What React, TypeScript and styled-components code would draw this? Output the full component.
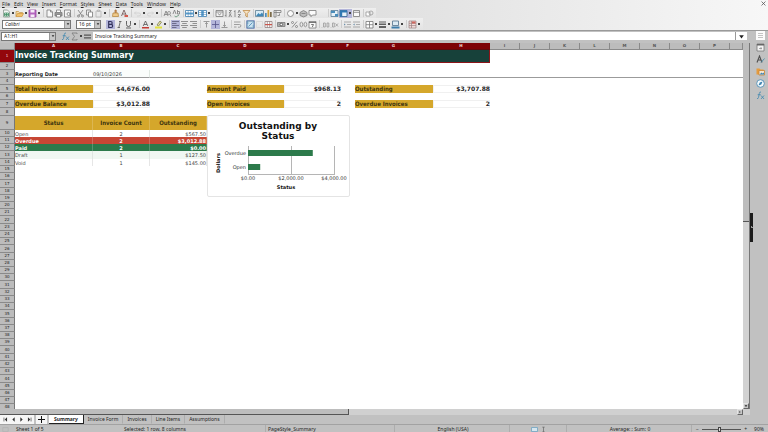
import React from "react";
import styled, { createGlobalStyle, css } from "styled-components";

const UI_FONT = `"Noto Sans", "Open Sans", sans-serif`;
const CELL_FONT = `"DejaVu Sans", sans-serif`;
const LABEL_FONT = `"DejaVu Sans Condensed", "DejaVu Sans", sans-serif`;

const color = {
  chrome: "#c1c1c1",
  gutter: "#bcbcbc",
  edge: "#8a8a8a",
  selected: "#7d0206",
  title: "#17413a",
  gold: "#d5a72b",
  red: "#c74634",
  green: "#2c7a4b",
  ink: "#262626",
};

const GlobalStyle = createGlobalStyle`
  * { box-sizing: border-box; }
  html, body, #root { margin: 0; height: 100%; }
  body { overflow: hidden; background: ${color.chrome}; font-family: ${UI_FONT}; font-size: 5px; color: ${color.ink}; }
  button, input, select { font: inherit; color: inherit; margin: 0; padding: 0; border: 0; background: none; border-radius: 0; outline: 0; }
`;

/* ---------- icons ---------- */

type Layer = { d: string; s?: string; f?: string; w?: number };
const G = "#7a7a7a";
const B = "#3f7fb0";
const L = "#b4b4b4";

const icons: Record<string, Layer[]> = {
  newDoc: [
    { d: "M1.5 1h4l2 2v5h-6z", s: "#8c9a90", f: "#f4f6f4" },
    { d: "M2.5 4h4v3h-4zM4.5 4v3M2.5 5.5h4", s: "#3f8f62" },
  ],
  open: [
    { d: "M1 7.5v-5h2.5l1 1h3v1", s: "#c79a52", f: "#f3dca8" },
    { d: "M1 7.5l1.5-3h6l-1.5 3z", s: "#d29b45", f: "#f2c26d" },
  ],
  save: [
    { d: "M1 1h7v7h-7z", s: "#9a4aa5", f: "#b566bf" },
    { d: "M2.5 1h4v2.5h-4zM2.5 5.5h4v2.5h-4z", f: "#f6ecf7" },
  ],
  exportDoc: [{ d: "M2 1h3.5l2 2v5h-5.500z", s: G, f: "#f8f8f8" }, { d: "M5.500 1v2h2", s: G }],
  print: [{ d: "M1 3.500h7v3.500h-7z", s: G, f: "#999" }, { d: "M2.500 1h4v2.500h-4zM2.500 5.500h4v2.500h-4z", s: G, f: "#fff" }],
  preview: [{ d: "M1.500 1h6v7h-6z", s: G, f: "#f5f5f5" }, { d: "M4 5a1.500 1.500 0 1 0 3 0a1.500 1.500 0 1 0-3 0M6.500 6.200l1.500 1.500", s: G }],
  cut: [{ d: "M2 1l4 5.500M7 1l-4 5.500M1.500 7a1 1 0 1 0 2 0a1 1 0 1 0-2 0M5.500 7a1 1 0 1 0 2 0a1 1 0 1 0-2 0", s: G }],
  copy: [{ d: "M1.500 1h4v5h-4z", s: G, f: "#eee" }, { d: "M3.500 3h4v5h-4z", s: G, f: "#fff" }],
  paste: [{ d: "M2 2h5v6h-5zM3.500 1h2v1.500h-2z", s: L }],
  brush: [{ d: "M4 1h1.200v3h-1.200z", s: "#a9713d", f: "#d79a5b" }, { d: "M2 4h5l.5 3.500h-6z", s: "#b88c45", f: "#efc98a" }],
  clear: [{ d: "M1.500 7l2.500-6l2.500 6M2.500 5h3", s: "#6b4d4d" }, { d: "M4.500 6h3.500v2h-3.500z", f: "#d4584c" }],
  undo: [{ d: "M1.500 4h4.500a1.500 1.500 0 0 1 0 3h-2M3 2.500l-1.500 1.500l1.500 1.500", s: "#cfcfcf" }],
  redo: [{ d: "M7.500 4h-4.500a1.500 1.500 0 0 0 0 3h2M6 2.500l1.500 1.500l-1.500 1.500", s: "#cfcfcf" }],
  find: [{ d: "M1 7l2-5l2 5M1.500 5.500h3", s: G }, { d: "M4.500 4a1.500 1.500 0 1 0 3 0a1.500 1.500 0 1 0-3 0M7 5.500l1 2", s: "#8a8a8a" }],
  spell: [{ d: "M1 5l1.500-4l1.500 4M5.500 1v4h2v-2.500h-2", s: G }, { d: "M2.500 7l1.500 1l3-2", s: "#5b8f70" }],
  row: [{ d: "M.5 1.500h8v6h-8z", s: B, f: "#fff" }, { d: "M1 3.500h7v2h-7z", f: "#5a9ccc" }, { d: "M3.200 1.500v6M5.800 1.500v6", s: B, w: 0.5 }],
  col: [{ d: "M.5 1.500h8v6h-8z", s: B, f: "#fff" }, { d: "M3.200 1.500h2.600v6h-2.600z", f: "#5a9ccc" }, { d: "M.5 3.500h8M.5 5.500h8", s: B, w: 0.5 }],
  sort: [{ d: "M1 1.500h7v6h-7zM1 3h7", s: G, f: "#f3f3f3" }, { d: "M3 4.200l1.500 2l1.500-2", s: G }],
  asc: [{ d: "M2 1v6.500l-1-1.500M5 1.500h2.500l-2.500 2.500h2.500M5 8l1.200-3l1.300 3", s: G }],
  desc: [{ d: "M2 8v-6.500l-1 1.500M5 4l1.200-3l1.300 3M5 5.500h2.500l-2.500 2.500h2.500", s: G }],
  filter: [{ d: "M1 1.500h7l-2.700 3v3.500l-1.600-1v-2.500z", s: "#c08a48", f: "#f6e4c4" }],
  image: [{ d: "M.5 1.500h8v6h-8z", s: "#5f7f93", f: "#d9ecf6" }, { d: "M1 7l2.500-3l1.500 1.500l2-2l1 1.500v2z", f: "#3f88b8" }],
  chart: [{ d: "M1 4h1.700v4h-1.700z", f: "#4a90c0" }, { d: "M3.500 1h1.700v7h-1.700z", f: "#d5a23d" }, { d: "M6 3h1.700v5h-1.700z", f: "#7a6a4a" }],
  pivot: [{ d: "M1 1.500h7v2h-5v4.500h-2zM3 1.500v2h-2", s: G, f: "#f2f2f2" }, { d: "M4.500 6.500h2v-2", s: G }],
  shapes: [{ d: "M1.500 4.500a3 3 0 1 0 6 0a3 3 0 1 0-6 0", s: G, f: "#fafafa" }],
  link: [{ d: "M1 3.500l3.500-2l3.500 2v3l-3.500 1.500l-3.500-1.500z", s: G, f: "#bdbdbd" }, { d: "M2.500 4.500h4", s: G }],
  comment: [{ d: "M1 1.500h7v4.500h-3.500l-1.500 1.700v-1.700h-2z", s: G, f: "#fcfcfc" }],
  header: [{ d: "M1 1.500h7v6h-7z", s: "#567a94", f: "#e6f1f8" }, { d: "M1 2h4v2h-4zM5 5h3v2.500h-3z", f: "#4b8dbb" }],
  freeze: [{ d: "M1 1.500h7v6h-7z", s: "#2c6391", f: "#e6f1f8" }, { d: "M1 1.500h7v2h-7zM1 1.500h2.200v6h-2.200z", f: "#2f78b3" }],
  split: [{ d: "M1.500 1.500h6v6h-6zM1.500 3.300h6", s: G, f: "#fafafa" }],
  draw: [{ d: "M1 3h4v4h-4z", s: "#9b9b9b", f: "#fff" }, { d: "M4 4a2 2 0 1 0 4 0a2 2 0 1 0-4 0", s: "#9b9b9b" }],
  bold: [{ d: "M2.700 1.500h2a1.400 1.400 0 0 1 0 2.900h-2zM2.700 4.400h2.400a1.500 1.500 0 0 1 0 3.100h-2.400z", s: "#33335c", w: 1.2 }],
  italic: [{ d: "M4 1.500h2.500M2.500 7.500h2.500M5.300 1.500l-1.500 6", s: "#555" }],
  underline: [{ d: "M2.500 1v3.500a2 2 0 0 0 4 0v-3.500M2 8h5", s: "#444" }],
  fontColor: [{ d: "M2.200 6l2.300-5l2.300 5M3 4.500h3", s: "#555" }, { d: "M1 7h7v1.500h-7z", f: "#c33c35" }],
  highlight: [{ d: "M3 5l3-4l1.500 1.200l-3 3.800z", s: "#7c7c55", f: "#e6e3a4" }, { d: "M1 6.500h7v2h-7z", f: "#e3e23d" }],
  left: [{ d: "M1 1.500h7M1 3.500h4.500M1 5.500h7M1 7.500h4.500", s: "#5a5a78" }],
  center: [{ d: "M1 1.500h7M2.200 3.500h4.600M1 5.500h7M2.200 7.500h4.600", s: G }],
  right: [{ d: "M1 1.500h7M3.500 3.500h4.500M1 5.500h7M3.500 7.500h4.500", s: G }],
  top: [{ d: "M1.500 1.500h6M4.500 2.500v5M3.200 4l1.300-1.500l1.300 1.500", s: "#858585" }],
  middle: [{ d: "M1 4.500h7M4.500 1v7", s: "#55558a" }],
  bottom: [{ d: "M1.500 7.500h6M4.500 1.500v5M3.200 5l1.300 1.500l1.300-1.500", s: "#858585" }],
  wrap: [{ d: "M1 2h6.500M1 4.500h5.500a1.300 1.300 0 0 1 0 2.700h-1.500M1 7h2.500", s: "#8a8a8a" }],
  merge: [{ d: "M1 1h7v7h-7z", s: "#3c7096", f: "#c9e1f0" }, { d: "M2.500 6.500l4-4M1 3h1.500M6.500 6h1.500", s: "#4988b4" }],
  mergeOff: [{ d: "M1.500 1.500h6v6h-6z", s: "#d4d4d4" }],
  splitCells: [{ d: "M1 1.500h7v6h-7zM3.300 1.500v6M5.700 1.500v6", s: "#8a7272", f: "#fff", w: 0.7 }, { d: "M1 4h7v1.200h-7z", f: "#c9564c" }],
  currency: [{ d: "M.5 2.500h7.500v4h-7.500z", s: G, f: "#ababab" }, { d: "M3 4.500a1.300 1.300 0 1 0 2.600 0a1.300 1.300 0 1 0-2.600 0", s: "#4b4b4b", f: "#fff" }],
  percent: [{ d: "M7 1.500l-5 6M1.500 2.500a1 1 0 1 0 2 0a1 1 0 1 0-2 0M5.500 6.500a1 1 0 1 0 2 0a1 1 0 1 0-2 0", s: G }],
  number: [{ d: "M1 4.500a1.400 2.300 0 1 0 2.800 0a1.400 2.300 0 1 0-2.800 0M5 4.500a1.400 2.300 0 1 0 2.800 0a1.400 2.300 0 1 0-2.800 0", s: "#858585" }],
  date: [{ d: "M1 1.500h7v6.500h-7z", s: G, f: "#fafafa" }, { d: "M1 2.500h7M3.200 4.500h2.300l-1.200 2.500", s: "#555" }],
  decAdd: [{ d: "M1 7v.5M2.500 3v4h1.800v-4zM6 3v4h1.800v-4z", s: "#9a9a9a" }],
  decDel: [{ d: "M1 7v.5M2.500 3v4h1.800v-4zM5.500 3.500l2.500 3M8 3.500l-2.500 3", s: "#9a9a9a" }],
  indentIn: [{ d: "M1 2h7M4 4.500h4M1 7h7", s: "#9a9a9a" }, { d: "M1 3.500v2l1.700-1z", f: "#6f92ad" }],
  indentOut: [{ d: "M1 2h7M4 4.500h4M1 7h7", s: "#9a9a9a" }, { d: "M2.700 3.500v2l-1.700-1z", f: "#6f92ad" }],
  borders: [{ d: "M1 1.500h7v6.500h-7zM4.500 1.500v6.500M1 4.700h7", s: "#777", f: "#fff" }],
  lineStyle: [{ d: "M1 1.500h7v1h-7zM1 3.500h7v1.500h-7zM1 6h7v2h-7z", f: "#606060" }],
  borderColor: [{ d: "M1.500 1h6v4.500h-6z", s: "#50708a", f: "#dcebf5" }, { d: "M.5 6.500h8v2h-8z", f: "#3c7dac" }],
  condFormat: [{ d: "M1 1h7v7h-7zM1 3.300h7M1 5.600h7M3.500 1v7", s: "#9a7f7f", f: "#f4dfdd", w: 0.7 }, { d: "M4 1.500h3.500v2h-3.500z", f: "#d0675e" }],
  fx: [{ d: "M5 1q-1.500-.3-1.700 1.500l-.8 4q-.3 1.500-1.500 1M1.700 3.700h3M5 4.500l3 3.500M8 4.500l-3 3.500", s: "#4088b0" }],
  sum: [{ d: "M7 2v-1h-5l2.500 3.500l-2.500 3.500h5v-1", s: G }],
  equals: [{ d: "M1 3.200h7M1 5.800h7", s: "#555", w: 1.2 }],
  menu: [{ d: "M0 0h9v9h-9z", f: "#fbfbfb" }, { d: "M2 2.500h5M2 4.500h5M2 6.500h5", s: "#aaa", w: 0.7 }],
  props: [{ d: "M1 1h7v7h-7z", s: "#777", f: "#f4f4f4" }, { d: "M1 1h7v1.500h-7z", f: "#666" }, { d: "M3 5.500h3M5 4v2.500", s: "#888", w: 0.7 }],
  styles: [{ d: "M1 7.500l2.500-6.500l2.500 6.500M2 5h3", s: "#505050", w: 1.1 }, { d: "M5 7.500l3.500-4", s: "#3c86a8" }],
  gallery: [{ d: "M.5 1.500h3l1 1h3v5h-7z", f: "#e69c3e" }, { d: "M3 3.500h5.500v4.500h-5.500z", s: "#c98435", f: "#f7e8d2" }, { d: "M3.500 7.500l2-2l1 1l1.500-1v2z", f: "#3c86b8" }],
  navigator: [{ d: "M.7 4.500a3.800 3.800 0 1 0 7.600 0a3.800 3.800 0 1 0-7.600 0", s: "#4288b4", f: "#f6fafc" }, { d: "M6.500 2.500l-1.200 3l-2.800 1l1.200-3z", f: "#3a83b0" }],
  doc: [{ d: "M1 2h7v5h-7z", s: "#b0b0b0" }],
  select: [{ d: "M.5 2.500h6v4h-6z", s: "#6fa3c2", f: "#d6e6ef" }],
  cursor: [{ d: "M3 1.500h3M4.500 1.500v6M3 7.500h3", s: "#5a5a5a" }],
  close: [{ d: "M2 2l5 5M7 2l-5 5", s: "#555", w: 1 }],
  first: [{ d: "M2.500 2v5", s: "#333" }, { d: "M6.500 1.500v6l-3-3z", f: "#333" }],
  prev: [{ d: "M6 1.500v6l-3-3z", f: "#333" }],
  next: [{ d: "M3 1.500v6l3-3z", f: "#333" }],
  last: [{ d: "M6.500 2v5", s: "#333" }, { d: "M2.500 1.500v6l3-3z", f: "#333" }],
  plus: [{ d: "M0 4.500h9M4.500 0v9", s: "#111", w: 1.3 }],
  down: [{ d: "M1.500 3h6l-3 4z", f: "#222" }],
  rightArrow: [{ d: "M3 2v5l3-2.500z", f: "#333" }],
  blank: [],
};

const Svg = styled.svg`
  display: block;
  flex: none;
`;

function Icon({ name, size = 9 }: { name: string; size?: number }) {
  return (
    <Svg width={size} height={size} viewBox="0 0 9 9" aria-hidden="true">
      {icons[name].map((l, i) => (
        <path key={i} d={l.d} fill={l.f ?? "none"} stroke={l.s ?? "none"} strokeWidth={l.w ?? 0.8} />
      ))}
    </Svg>
  );
}

/* ---------- shell ---------- */

const Window = styled.div`
  display: flex;
  flex-direction: column;
  height: 100vh;
  background: ${color.chrome};
  line-height: 7px;
`;

const TopArea = styled.header`
  flex: none;
  background: linear-gradient(90deg, #d9d9d9, #dedede 45%, #f7f7f7);
  border-bottom: 1px solid #9a9a9a;
`;

const MenuBar = styled.nav`
  display: flex;
  align-items: center;
  height: 8px;
`;

const MenuItem = styled.button`
  padding: 0 2px;
  line-height: 7px;
  &::first-letter { text-decoration: underline; }
`;

const CloseButton = styled.button`
  margin-left: auto;
  padding-right: 1px;
  align-self: flex-start;
`;

const ToolRow = styled.div<{ $tall?: boolean }>`
  display: flex;
  align-items: center;
  width: fit-content;
  height: ${(p) => (p.$tall ? 12 : 10)}px;
  padding: 0 2px;
  background: linear-gradient(#efefef, #e3e3e3);
`;

const ToolButton = styled.button<{ $active?: boolean }>`
  display: flex;
  align-items: center;
  height: 9px;
  background: ${(p) => (p.$active ? "#b4b6da" : "none")};
`;

const Caret = styled.span`
  width: 4px;
  height: 2px;
  background: linear-gradient(#444, #444) center / 2px 2px no-repeat;
`;

const Divider = styled.span`
  width: 4px;
  height: 8px;
  background: linear-gradient(#cdcdcd, #cdcdcd) center / 1px 100% no-repeat;
`;

const Combo = styled.div<{ $w: number }>`
  display: flex;
  flex: none;
  width: ${(p) => p.$w}px;
  height: 9px;
  margin-right: 5px;
  background: #fff;
  border: 1px solid #777;
`;

const ComboSelect = styled.select<{ $italic?: boolean }>`
  appearance: none;
  flex: 1;
  min-width: 0;
  padding-left: 2px;
  line-height: 7px;
  font-style: ${(p) => (p.$italic ? "italic" : "normal")};
`;

const ComboArrow = styled.span`
  display: flex;
  align-items: center;
  justify-content: center;
  width: 6px;
  background: #c6c6c6;
  border-left: 1px solid #999;
`;

type Tool = string;
const standardTools: Tool[] =
  "newDoc+ open+ save+ | exportDoc print preview | cut copy paste+ | brush clear | undo+ redo+ | find spell | row+ col+ | sort asc desc filter | image chart pivot | shapes+ link comment blank | header freeze+* split | draw".split(" ");
const formatTools: Tool[] =
  "bold* italic underline+ | fontColor+ highlight+ | left* center right | top middle* bottom | wrap | merge* mergeOff splitCells | currency+ percent number date | decAdd decDel | indentIn indentOut | borders+ lineStyle+ borderColor+ | condFormat+".split(" ");

function Tools({ items }: { items: Tool[] }) {
  return (
    <>
      {items.map((t, i) => {
        if (t === "|") return <Divider key={i} />;
        const name = t.replace(/[+*]/g, "");
        return (
          <ToolButton key={i} aria-label={name} $active={t.includes("*")}>
            <Icon name={name} />
            {t.includes("+") && <Caret />}
          </ToolButton>
        );
      })}
    </>
  );
}

function ComboBox({ label, value, width, italic }: { label: string; value: string; width: number; italic?: boolean }) {
  return (
    <Combo $w={width}>
      <ComboSelect aria-label={label} $italic={italic} defaultValue={value}>
        <option>{value}</option>
      </ComboSelect>
      <ComboArrow><Icon name="down" size={4} /></ComboArrow>
    </Combo>
  );
}

const Middle = styled.div`
  display: flex;
  flex: 1;
  min-height: 0;
`;

const Workspace = styled.main`
  display: flex;
  flex-direction: column;
  flex: 1;
  min-width: 0;
`;

const FormulaRow = styled.div`
  display: flex;
  flex: none;
  align-items: center;
  height: 12px;
  padding: 0 3px 2px 1px;
`;

const FormulaTools = styled.div`
  display: flex;
  margin-right: 1px;
`;

const FormulaInput = styled.input`
  flex: 1;
  min-width: 0;
  height: 8px;
  padding-left: 2px;
  background: #fff;
  border-right: 1px solid #999;
`;

const ExpandButton = styled.button`
  display: flex;
  align-items: center;
  justify-content: center;
  width: 11px;
  height: 8px;
  background: #fff;
`;

/* ---------- sheet ---------- */

const SheetRow = styled.div`
  display: flex;
  flex: 1;
  min-height: 0;
`;

const SheetPane = styled.div`
  position: relative;
  flex: 1;
  min-width: 0;
  overflow: hidden;
  background: #fff;
`;

const Grid = styled.table`
  width: 100%;
  table-layout: fixed;
  border-collapse: separate;
  border-spacing: 0;
  font-family: ${CELL_FONT};
  td, th { padding: 0; line-height: 6px; white-space: nowrap; font-weight: normal; }
`;

const Col = styled.col<{ $w?: number }>`
  width: ${(p) => (p.$w ? `${p.$w}px` : "auto")};
`;

const Row = styled.tr<{ $h: number; $frozen?: boolean }>`
  height: ${(p) => p.$h}px;
  ${(p) => p.$frozen && css`td { border-bottom: 1px solid #9b9b9b; }`}
`;

const ColHead = styled.th<{ $on?: boolean }>`
  font-size: 4px;
  && { font-weight: bold; }
  color: ${(p) => (p.$on ? "#f0dede" : "#555")};
  background: ${(p) => (p.$on ? color.selected : color.gutter)};
  border-bottom: 1px solid ${(p) => (p.$on ? "#5e0a0c" : color.edge)};
  border-right: 1px solid ${(p) => (p.$on ? color.selected : color.edge)};
`;

const RowHead = styled.th<{ $on?: boolean }>`
  font-size: 4px;
  color: ${(p) => (p.$on ? "#f0dede" : "#222")};
  background: ${(p) => (p.$on ? "#93060c" : color.gutter)};
  border-bottom: 1px solid ${color.edge};
  border-right: 1px solid #777;
`;

type Kind = "title" | "date" | "strong" | "label" | "value" | "head" | "body" | "band" | "red" | "green";

const kinds: Record<Kind, ReturnType<typeof css>> = {
  title: css`background: ${color.title}; color: #fff; font-size: 8px; && { font-weight: bold; } border-right: 1px solid #8b1418; border-bottom: 1px solid #8b1418;`,
  date: css`font-size: 5px; color: #444; background: #fafdfb; border-right: 1px solid #dfe8e2;`,
  strong: css`font-size: 5px; && { font-weight: bold; }`,
  label: css`font-family: ${LABEL_FONT}; font-size: 6px; && { font-weight: bold; } color: #40350f; background: ${color.gold};`,
  value: css`font-size: 6px; && { font-weight: bold; } box-shadow: inset 0 0 0 1px #f0f0f0;`,
  head: css`font-family: ${LABEL_FONT}; font-size: 6px; && { font-weight: bold; } color: #40350f; background: ${color.gold}; border-right: 1px solid #dcb652;`,
  body: css`font-size: 5px; color: #444; border-right: 1px solid #e6e6e6;`,
  band: css`font-size: 5px; color: #444; background: #f0f7f2; border-right: 1px solid #e0e6e2;`,
  red: css`font-size: 5px; && { font-weight: bold; } color: #fff; background: ${color.red}; border-right: 1px solid #d06a5c;`,
  green: css`font-size: 5px; && { font-weight: bold; } color: #fff; background: ${color.green}; border-right: 1px solid #569370;`,
};

const Cell = styled.td<{ $kind: Kind; $align?: string }>`
  text-align: ${(p) => p.$align ?? "left"};
  ${(p) => kinds[p.$kind]}
`;

const columns = [78, 57, 57, 77, 57, 14, 78, 57, 30, 30, 30, 30, 30, 30, 30, 30];
const letters = "ABCDEFGHIJKLMNOP".split("");

type CellData = { at: number; text: string; kind: Kind; align?: string; span?: number };

const summary = (...pairs: string[][]): CellData[] =>
  pairs.flatMap(([label, value], i) => {
    const at = [0, 3, 6][i];
    return [
      { at, text: label, kind: "label" as Kind },
      { at: at + 1, text: value, kind: "value" as Kind, align: "right" },
    ];
  });

const status = (kind: Kind, name: string, count: string, amount: string): CellData[] => [
  { at: 0, text: name, kind, align: kind === "head" ? "center" : "left" },
  { at: 1, text: count, kind, align: "center" },
  { at: 2, text: amount, kind, align: kind === "head" ? "center" : "right" },
];

const content: Record<number, CellData[]> = {
  1: [{ at: 0, text: "Invoice Tracking Summary", kind: "title", span: 8 }],
  3: [
    { at: 0, text: "Reporting Date", kind: "strong" },
    { at: 1, text: "09/10/2026", kind: "date" },
  ],
  5: summary(["Total Invoiced", "$4,676.00"], ["Amount Paid", "$968.13"], ["Outstanding", "$3,707.88"]),
  7: summary(["Overdue Balance", "$3,012.88"], ["Open Invoices", "2"], ["Overdue Invoices", "2"]),
  9: status("head", "Status", "Invoice Count", "Outstanding"),
  10: status("body", "Open", "2", "$567.50"),
  11: status("red", "Overdue", "2", "$3,012.88"),
  12: status("green", "Paid", "2", "$0.00"),
  13: status("band", "Draft", "1", "$127.50"),
  14: status("body", "Void", "1", "$145.00"),
};

const topHeights = [13, 7, 8, 7, 8, 7, 8, 8, 14];
const rowHeight = (n: number) => topHeights[n - 1] ?? ([3, 7].includes((n - 10) % 9) ? 8 : 7);

function renderCells(row: number) {
  const cells: React.ReactNode[] = [];
  let at = 0;
  for (const c of content[row] ?? []) {
    if (c.at > at) cells.push(<td key={`gap${at}`} colSpan={c.at - at} />);
    cells.push(
      <Cell key={c.at} $kind={c.kind} $align={c.align} colSpan={c.span ?? 1}>{c.text}</Cell>,
    );
    at = c.at + (c.span ?? 1);
  }
  cells.push(<td key="rest" colSpan={columns.length + 1 - at} />);
  return cells;
}

const ChartFrame = styled.figure`
  position: absolute;
  top: 72px;
  left: 207px;
  width: 143px;
  height: 82px;
  margin: 0;
  background: #fff;
  border: 1px solid #e4e4e4;
  border-radius: 2px;
`;

const ChartText = styled.text<{ $size?: number; $bold?: boolean }>`
  font-family: ${CELL_FONT};
  font-size: ${(p) => p.$size ?? 5}px;
  font-weight: ${(p) => (p.$bold ? "bold" : "normal")};
  fill: ${(p) => (p.$bold ? "#111" : "#333")};
`;

function StatusChart() {
  const bars = [
    { name: "Overdue", value: 3012.88, y: 34 },
    { name: "Open", value: 567.5, y: 48 },
  ];
  const ticks = ["$0.00", "$2,000.00", "$4,000.00"];
  return (
    <ChartFrame>
      <Svg width="141" height="80" viewBox="0 0 141 80" role="img" aria-label="Outstanding by Status">
        <ChartText x="70" y="13" textAnchor="middle" $size={9} $bold>Outstanding by</ChartText>
        <ChartText x="70" y="23" textAnchor="middle" $size={9} $bold>Status</ChartText>
        {ticks.map((t, i) => (
          <g key={t}>
            <path d={`M${40.5 + i * 43} 30v29`} stroke="#b5b5b5" />
            <ChartText x={40 + i * 43} y="64" textAnchor="middle">{t}</ChartText>
          </g>
        ))}
        <path d="M40 58.5h86" stroke="#b5b5b5" />
        {bars.map((b) => (
          <g key={b.name}>
            <rect x="40" y={b.y} width={(b.value / 4000) * 86} height="6" fill={color.green} />
            <ChartText x="38" y={b.y + 5} textAnchor="end">{b.name}</ChartText>
          </g>
        ))}
        <ChartText x="78" y="73" textAnchor="middle" $bold>Status</ChartText>
        <ChartText transform="translate(12 47) rotate(-90)" textAnchor="middle" $bold>Dollars</ChartText>
      </Svg>
    </ChartFrame>
  );
}

/* ---------- scrollbars ---------- */

const VScroll = styled.div`
  display: flex;
  flex-direction: column;
  flex: none;
  width: 7px;
  background: #d2d2d2;
  border-right: 1px solid #777;
`;

const VThumb = styled.div`
  height: 49%;
  background: #bdbdbd;
  border-bottom: 1px solid #555;
`;

const ScrollButton = styled.button<{ $end?: boolean }>`
  display: flex;
  align-items: center;
  justify-content: center;
  width: 6px;
  height: 6px;
  margin: ${(p) => (p.$end ? "auto 0 0" : "0 7px 0 auto")};
  background: #c6c6c6;
  border: 1px solid;
  border-color: #e4e4e4 #666 #666 #e4e4e4;
`;

const HScroll = styled.div`
  display: flex;
  flex: none;
  height: 6px;
  background: #d0d0d0;
`;

const HThumb = styled.div`
  width: 46.5%;
  background: #bdbdbd;
  border-right: 1px solid #555;
  border-bottom: 1px solid #555;
`;

/* ---------- tabs, sidebar, status ---------- */

const TabBar = styled.nav`
  display: flex;
  flex: none;
  height: 9px;
  background: ${color.chrome};
`;

const TabNav = styled.div`
  display: flex;
  align-items: center;
  gap: 1px;
  height: 9px;
  padding: 0 1px 0 2px;
  margin-right: 2px;
  background: #f6f6f6;
`;

const TabNavButton = styled.button`
  display: flex;
  align-items: center;
  justify-content: center;
  width: 7px;
  height: 8px;
`;

const AddTab = styled.button`
  display: flex;
  align-items: center;
  justify-content: center;
  width: 11px;
  height: 9px;
  margin-right: 2px;
  background: #f6f6f6;
`;

const Tab = styled.button<{ $on?: boolean }>`
  height: 9px;
  padding: 0 ${(p) => (p.$on ? 5 : 4)}px;
  line-height: 8px;
  font-weight: ${(p) => (p.$on ? "bold" : "normal")};
  background: ${(p) => (p.$on ? "#fff" : "none")};
  border-right: 1px solid ${(p) => (p.$on ? "#222" : "#adadad")};
  border-bottom: 1px solid ${(p) => (p.$on ? "#222" : "transparent")};
`;

const Sidebar = styled.aside`
  display: flex;
  flex: none;
  width: 18px;
`;

const SidebarGrip = styled.button`
  align-self: center;
  width: 3px;
  height: 29px;
  background: radial-gradient(circle at center, #999 1px, #1c1c1c 1px);
`;

const SidebarTabs = styled.div`
  display: flex;
  flex-direction: column;
  align-items: center;
  flex: 1;
`;

const SidebarButton = styled.button`
  display: flex;
  align-items: flex-start;
  height: 12px;
`;

const StatusBar = styled.footer`
  display: grid;
  flex: none;
  grid-template-columns:
    minmax(0, 14fr) minmax(0, 108fr) minmax(0, 144fr) minmax(0, 129fr)
    minmax(0, 115fr) minmax(0, 57fr) minmax(0, 125fr) minmax(0, 76fr);
  height: 8px;
  border-top: 1px solid #a2a2a2;
`;

const StatusItem = styled.div<{ $center?: boolean; $rule?: boolean }>`
  display: flex;
  align-items: center;
  justify-content: ${(p) => (p.$center ? "center" : "flex-start")};
  padding-left: 2px;
  line-height: 7px;
  white-space: nowrap;
  border-right: ${(p) => (p.$rule ? "1px solid #adadad" : "0")};
`;

const ZoomControl = styled(StatusItem)`
  gap: 3px;
  padding: 0 4px;
`;

const ZoomLevel = styled.span`
  margin-left: 4px;
`;

const ZoomSlider = styled.input`
  appearance: none;
  flex: 1;
  min-width: 0;
  height: 5px;
  background: linear-gradient(#555, #555) center / 100% 1px no-repeat;
  &::-webkit-slider-thumb {
    appearance: none;
    width: 3px;
    height: 5px;
    background: #ddd;
    border: 1px solid #444;
  }
`;

const menus = ["File", "Edit", "View", "Insert", "Format", "Styles", "Sheet", "Data", "Tools", "Window", "Help"];
const tabs = ["Summary", "Invoice Form", "Invoices", "Line Items", "Assumptions"];

export default function App() {
  return (
    <Window>
      <GlobalStyle />
      <TopArea>
        <MenuBar aria-label="Main menu">
          {menus.map((m) => <MenuItem key={m}>{m}</MenuItem>)}
          <CloseButton aria-label="Close document"><Icon name="close" size={7} /></CloseButton>
        </MenuBar>
        <ToolRow><Tools items={standardTools} /></ToolRow>
        <ToolRow $tall>
          <ComboBox label="Font name" value="Calibri" width={69} italic />
          <ComboBox label="Font size" value="16 pt" width={25} />
          <Tools items={formatTools} />
        </ToolRow>
      </TopArea>

      <Middle>
        <Workspace>
          <FormulaRow>
            <ComboBox label="Name box" value="A1:H1" width={55} />
            <FormulaTools>
              <ToolButton aria-label="Function wizard"><Icon name="fx" /></ToolButton>
              <ToolButton aria-label="Select function"><Icon name="sum" /><Caret /></ToolButton>
              <ToolButton aria-label="Formula"><Icon name="equals" /></ToolButton>
            </FormulaTools>
            <FormulaInput aria-label="Formula input" defaultValue="Invoice Tracking Summary" />
            <ExpandButton aria-label="Expand formula bar"><Icon name="down" size={7} /></ExpandButton>
          </FormulaRow>

          <SheetRow>
            <SheetPane>
              <Grid>
                <colgroup>
                  <Col $w={15} />
                  {columns.map((w, i) => <Col key={i} $w={w} />)}
                  <Col />
                </colgroup>
                <thead>
                  <Row $h={7}>
                    <ColHead />
                    {letters.map((l, i) => <ColHead key={l} $on={i < 8}>{l}</ColHead>)}
                    <ColHead />
                  </Row>
                </thead>
                <tbody>
                  {Array.from({ length: 48 }, (_, i) => i + 1).map((n) => (
                    <Row key={n} $h={rowHeight(n)} $frozen={n === 3}>
                      <RowHead scope="row" $on={n === 1}>{n}</RowHead>
                      {renderCells(n)}
                    </Row>
                  ))}
                </tbody>
              </Grid>
              <StatusChart />
            </SheetPane>
            <VScroll>
              <VThumb />
              <ScrollButton $end aria-label="Scroll down"><Icon name="down" size={4} /></ScrollButton>
            </VScroll>
          </SheetRow>

          <HScroll>
            <HThumb />
            <ScrollButton aria-label="Scroll right"><Icon name="rightArrow" size={4} /></ScrollButton>
          </HScroll>

          <TabBar aria-label="Sheets">
            <TabNav>
              {["first", "prev", "next", "last"].map((n) => (
                <TabNavButton key={n} aria-label={`${n} sheet`}><Icon name={n} size={7} /></TabNavButton>
              ))}
            </TabNav>
            <AddTab aria-label="Add sheet"><Icon name="plus" size={7} /></AddTab>
            {tabs.map((t, i) => <Tab key={t} $on={i === 0}>{t}</Tab>)}
          </TabBar>
        </Workspace>

        <Sidebar>
          <SidebarGrip aria-label="Collapse sidebar" />
          <SidebarTabs>
            {["menu", "props", "styles", "gallery", "navigator", "fx"].map((n) => (
              <SidebarButton key={n} aria-label={n}><Icon name={n} /></SidebarButton>
            ))}
          </SidebarTabs>
        </Sidebar>
      </Middle>

      <StatusBar>
        <StatusItem><Icon name="doc" size={7} /></StatusItem>
        <StatusItem>Sheet 1 of 5</StatusItem>
        <StatusItem $rule>Selected: 1 row, 8 columns</StatusItem>
        <StatusItem $rule>PageStyle_Summary</StatusItem>
        <StatusItem $center $rule>English (USA)</StatusItem>
        <StatusItem $center $rule><Icon name="select" /><Icon name="cursor" size={7} /></StatusItem>
        <StatusItem $center $rule>Average: ; Sum: 0</StatusItem>
        <ZoomControl>
          <span>−</span>
          <ZoomSlider type="range" min={0} max={100} defaultValue={45} aria-label="Zoom" />
          <span>+</span>
          <ZoomLevel>90%</ZoomLevel>
        </ZoomControl>
      </StatusBar>
    </Window>
  );
}
